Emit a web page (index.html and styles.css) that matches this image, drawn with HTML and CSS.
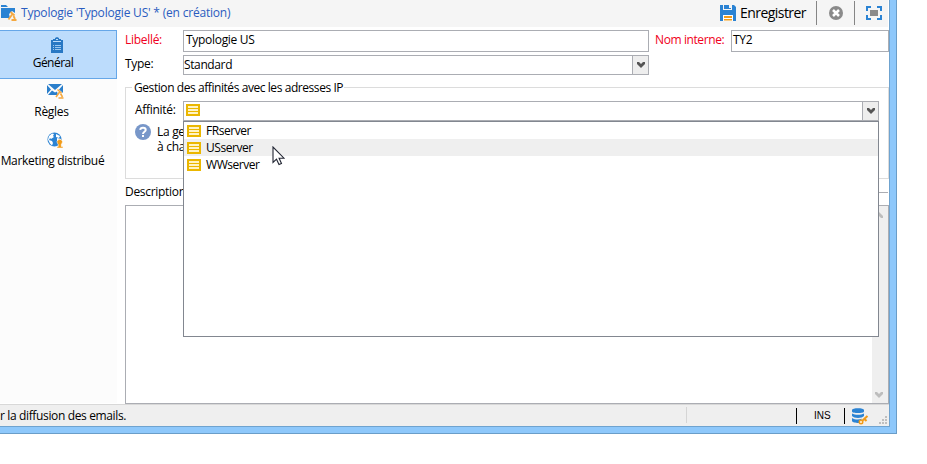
FILE: index.html
```html
<!DOCTYPE html>
<html lang="fr">
<head>
<meta charset="utf-8">
<title>Typologie</title>
<link rel="stylesheet" href="styles.css">
</head>
<body>
<svg width="0" height="0" class="defs">
  <symbol id="list" viewBox="0 0 14 12"><path fill="#ebb700" d="M0 0h14v12H0z"/><path fill="#fff3c4" d="M2 2h10v2H2zM2 5h10v2H2zM2 8h10v2H2z"/></symbol>
  <symbol id="chev" viewBox="0 0 8 6"><path fill="currentColor" d="M0 0h2l2 2 2-2h2v2L4 6 0 2z"/></symbol>
</svg>
<div class="window">
  <div class="inner">
    <header class="toolbar">
      <svg class="folder" width="17" height="16" viewBox="0 0 17 16"><path fill="#2b83d3" d="M1 0h5l2 2H1zM1 3h14v5l-3-2-3 3 1 4H1z"/><path fill="none" stroke="#f5a83f" stroke-width="1.800" d="M10.500 7l4 3.500M12.500 9L8.500 14.500M13.500 11l1.500 3M11.500 15h5"/></svg>
      <h1>Typologie 'Typologie US' * (en création)</h1>
      <svg class="save" width="16" height="16" viewBox="0 0 16 16"><path fill="#2b83d3" d="M0 0h14l2 2v14h-3v-6H3v6H0z"/><path fill="#f5f5f5" d="M3 0h1v5H3zM11 0h1v5h-1zM4 4h8v1H4zM9 0h2v3H9z"/><path fill="#fff" d="M3 10h10v6H3z"/><path fill="#f29b18" d="M4 11h8v2H4zM4 14h8v1.500H4z"/></svg>
      <span class="save-label">Enregistrer</span>
      <i class="sep"></i>
      <svg class="close" width="14" height="14" viewBox="0 0 14 14"><circle cx="7" cy="7" r="7" fill="#8a8a8a"/><path stroke="#fff" stroke-width="2.500" d="M4 4l6 6M10 4l-6 6"/></svg>
      <i class="sep"></i>
      <svg class="full" width="16" height="14" viewBox="0 0 16 14"><path fill="none" stroke="#2b83d3" stroke-width="2" d="M1 5V1h4M11 1h4v4M15 9v4h-4M5 13H1V9"/><path fill="#8a8a8a" d="M4 4h8v6H4z"/></svg>
    </header>
    <div class="main">
      <nav>
        <a class="tab on"><svg width="12" height="16" viewBox="0 0 12 16"><path fill="#2878c4" d="M0 3h2V2h2V1l2-1 2 1v1h2v1h2v13H0z"/><path fill="#bcdcfc" d="M5 2h2v1H5zM2 4h8v1H2z"/><path fill="#9cc8f0" d="M2 8h1v1H2zM4 8h6v1H4zM2 10h1v1H2zM4 10h6v1H4zM2 12h1v1H2zM4 12h6v1H4z"/></svg><span>Général</span></a>
        <a class="tab rules"><svg width="17" height="16" viewBox="0 0 17 16"><path fill="#2b7fcb" d="M1 1h14L8 7zM0 2l4 4.500L0 11zM16 2v8l-4-3.500zM1 12l4-4.500 3 2 2-1 1 3.500z"/><path fill="none" stroke="#f5a83f" stroke-width="1.600" d="M10.500 6.500l4 3.500M13 8.500l-4 5.500M13.500 10.500l2 3.500M11.500 15h5"/></svg><span>Règles</span></a>
        <a class="tab market"><svg width="17" height="16" viewBox="0 0 17 16"><circle cx="7.500" cy="7.500" r="7" fill="#2b83d3"/><path fill="#fff" d="M2 4l3-2.500 2 .5-1 2 1 1-3 2-1-1-1 2 3 1 1 2-1 2.500-2-2-2-4zM9 2l4 2-1 2-3-1zM10 6l4 1v2h-4z"/><path fill="#f29b18" stroke="#fff" stroke-width=".5" d="M10 16v-1.500h1.200V12l-.7-.5a2.700 2.700 0 1 1 4.500 0l-.7.500v2.500H16V16z"/></svg><span>Marketing distribué</span></a>
      </nav>
      <section class="form">
        <div class="row first"><label class="req lib">Libellé:</label><div class="field title-field"><span>Typologie US</span></div><label class="req nom">Nom interne:</label><div class="field code"><span>TY2</span></div></div>
        <div class="row second"><label class="type">Type:</label><div class="field combo type-combo"><span>Standard</span><b><svg width="8" height="6"><use href="#chev"/></svg></b></div></div>
        <div class="group">
          <div class="legend"><i></i><span>Gestion des affinités avec les adresses IP</span><i class="rest"></i></div>
          <div class="body">
            <div class="row aff"><label>Affinité:</label><div class="field combo"><svg class="li" width="14" height="12"><use href="#list"/></svg><b><svg width="8" height="6"><use href="#chev"/></svg></b>
              <div class="menu">
                <div class="item"><svg width="14" height="12"><use href="#list"/></svg><span>FRserver</span></div>
                <div class="item hover"><svg width="14" height="12"><use href="#list"/></svg><span>USserver</span></div>
                <div class="item"><svg width="14" height="12"><use href="#list"/></svg><span>WWserver</span></div>
                <svg class="cursor" width="13" height="20" viewBox="0 0 13 20"><path fill="#fff" stroke="#222633" stroke-width="1.100" d="M1 1v15.500l3.500-3.300 2.500 5.300 2.500-1.100-2.400-5.200H12z"/></svg>
              </div></div></div>
            <div class="help"><svg width="16" height="16" viewBox="0 0 16 16"><circle cx="8" cy="8" r="8" fill="#7897c9"/><path fill="none" stroke="#fff" stroke-width="2" d="M5.200 5.800C5.500 3 10.700 3 10.700 5.900 10.700 7.800 8 7.700 8 10"/><path fill="#fff" d="M7 11h2v2H7z"/></svg><div class="lines"><div>La ge</div><div>à cha</div></div></div>
          </div>
        </div>
        <div class="desc"><span>Description</span><i></i></div>
        <div class="area"><div class="scroll"><svg class="up" width="8" height="6"><use href="#chev"/></svg><svg width="8" height="6"><use href="#chev"/></svg></div></div>
      </section>
    </div>
    <footer>
      <span class="msg">r la diffusion des emails.</span><i class="s0"></i><i class="s1"></i><span class="ins">INS</span><i class="s2"></i>
      <svg class="db" width="17" height="17" viewBox="0 0 17 17"><path fill="#2b83d3" d="M0 2C0-.5 12-.5 12 2v1.500C12 5.500 0 5.500 0 3.500zM0 5.500c3 1.700 9 1.700 12 0V8c-2 2.500-10 2.500-12 0zM0 10c3 2 7 2 10 .8L7 15c-4 0-7-1-7-2z"/><path fill="none" stroke="#f29b18" stroke-width="2" d="M15.500 8L10 13M12.500 11l2 2"/><circle cx="9" cy="14" r="1.700" fill="#fff" stroke="#f29b18" stroke-width="1.600"/></svg>
      <svg class="grip" width="8" height="8" viewBox="0 0 8 8"><path fill="#bfbfbf" d="M6 0h2v2H6zM3 3h2v2H3zM6 3h2v2H6zM0 6h2v2H0zM3 6h2v2H3zM6 6h2v2H6z"/></svg>
    </footer>
  </div>
</div>
</body>
</html>
```
FILE: styles.css
```css
* { box-sizing: border-box; }
body { margin: 0; background: #fff; color: #000; font: 12px/16px "Open Sans", "Noto Sans", sans-serif; letter-spacing: -0.3px; overflow: hidden; white-space: nowrap; }
svg { display: block; flex: none; }
.defs { position: absolute; }
.window { width: 897px; height: 434px; background: #8ec8fb; border: solid #6a9dc8; border-width: 0 1px 1px 0; }
.inner { width: 890px; height: 427px; background: #fff; border: solid #6fa3cf; border-width: 0 1px 1px 0; display: flex; flex-direction: column; }
.toolbar { height: 27px; width: 888px; background: #f5f5f5; display: flex; align-items: flex-start; }
.folder { margin-top: 5px; }
h1 { margin: 5px 0 0 4px; width: 699px; font-size: 12px; font-weight: 400; line-height: 16px; letter-spacing: -0.2px; color: #2a5cc0; }
.save { margin-top: 5px; }
.save-label { margin: 4px 0 0 4px; width: 76px; font-size: 14px; line-height: 18px; letter-spacing: -0.55px; }
.sep { width: 1px; height: 24px; margin-top: 1px; background: #858585; }
.close { margin: 6px 11px 0 12px; }
.full { margin: 6px 0 0 11px; }
.main { display: flex; height: 377px; }
nav { width: 117px; height: 373px; margin-top: 3px; background: #fcfcfc; }
.tab { display: flex; flex-direction: column; align-items: center; width: 117px; height: 49px; padding: 6px 10px 0 0; border: 1px solid transparent; border-left: 0; }
.tab span { margin-top: 2px; }
.on { background: #bcdcfc; border-color: #66a7e8; }
.on svg { margin-right: -6px; }
.on span { letter-spacing: -0.5px; margin-right: 0; }
.tab svg { margin-left: 2px; }
.rules svg, .market svg { margin: -3px -4px 3px 0; }
.rules span { margin-right: 3px; }
.market span { margin-left: -1px; }
.form { width: 765px; margin: 3px -1px 0 8px; }
.row { display: flex; }
.field { border: 1px solid #abadb3; background: #fff; display: flex; }
.lib, .type { width: 58px; }
.req { color: #f00020; }
.first label { margin-top: 2px; }
.title-field { width: 466px; height: 22px; padding: 1px 2px; }
.nom { width: 76px; margin-left: 6px; letter-spacing: -0.4px; }
.code { width: 158px; height: 22px; padding: 1px; }
.second { margin-top: 3px; }
.second label { margin-top: 1px; }
.combo { height: 20px; justify-content: space-between; line-height: 18px; position: relative; }
.combo b { width: 16px; border-left: 1px solid #abadb3; background: #eee; color: #555; display: flex; align-items: center; justify-content: center; }
.type-combo { width: 466px; }
.type-combo span { letter-spacing: -0.38px; }
.group { margin-top: 5px; width: 764px; }
.legend { display: flex; height: 16px; align-items: flex-start; }
.legend i { width: 7px; height: 9px; margin-top: 7px; border: solid #dcdcdc; border-width: 1px 0 0 1px; }
.legend span { margin: 0 1px 0 2px; letter-spacing: -0.43px; }
.legend .rest { flex: 1; border-width: 1px 1px 0 0; }
.body { height: 83px; border: solid #dcdcdc; border-width: 0 1px 1px; padding-top: 5px; }
.aff label { width: 57px; padding-left: 9px; margin-top: 1px; }
.aff .combo { width: 696px; }
.li { margin: 2px 0 0 2px; }
.menu { position: absolute; left: -1px; top: 19px; width: 696px; height: 216px; background: #fff; border: 1px solid #828790; z-index: 2; }
.item { height: 17px; display: flex; align-items: center; gap: 5px; padding-left: 3px; line-height: 17px; letter-spacing: -0.45px; }
.hover { background: #efefef; }
.cursor { position: absolute; left: 88px; top: 24px; }
.help { display: flex; margin: 3px 0 0 9px; }
.lines { margin-left: 6px; width: 26px; overflow: hidden; line-height: 15px; }
.desc { display: flex; width: 763px; margin-top: 5px; align-items: center; }
.desc i { flex: 1; height: 1px; margin-top: 1px; background: #abadb3; }
.area { margin-top: 5px; height: 199px; width: 764px; border: 1px solid #abadb3; display: flex; justify-content: flex-end; }
.scroll { width: 16px; background: #efefef; color: #bdbdbd; display: flex; flex-direction: column; justify-content: space-between; padding: 6px 4px 5px 3px; }
.up { transform: rotate(180deg); }
footer { height: 22px; background: #efefef; border-top: 1px solid #d8d8d8; display: flex; align-items: flex-start; }
.msg { width: 686px; margin-top: 3px; letter-spacing: -0.36px; }
.s0 { width: 1px; height: 16px; margin-top: 2px; background: #d5d5d5; }
.s1, .s2 { width: 1px; height: 16px; margin-top: 3px; background: #000; }
.s1 { margin-left: 109px; }
.ins { width: 47px; padding-left: 17px; margin-top: 3px; font: 10px/16px "Liberation Sans", sans-serif; letter-spacing: 0; }
.db { margin: 3px 0 0 7px; }
.grip { margin: 11px 0 0 10px; }
```
